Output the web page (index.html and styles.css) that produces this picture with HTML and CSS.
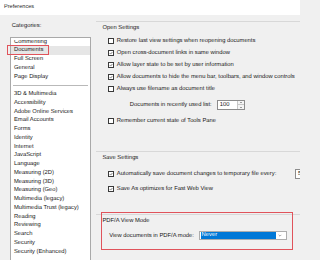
FILE: index.html
```html
<!DOCTYPE html>
<html>
<head>
<meta charset="utf-8">
<title>Preferences</title>
<link rel="stylesheet" href="styles.css">
</head>
<body>
<div class="titlebar">Preferences</div>
<div class="main">
  <div class="left">
    <div class="cat-label">Categories:</div>
    <div class="listbox">
      <div class="viewport">
        <ul class="items">
          <li>Commenting</li>
          <li class="sel">Documents</li>
          <li>Full Screen</li>
          <li>General</li>
          <li>Page Display</li>
          <li class="sep"></li>
          <li>3D &amp; Multimedia</li>
          <li>Accessibility</li>
          <li>Adobe Online Services</li>
          <li>Email Accounts</li>
          <li>Forms</li>
          <li>Identity</li>
          <li>Internet</li>
          <li>JavaScript</li>
          <li>Language</li>
          <li>Measuring (2D)</li>
          <li>Measuring (3D)</li>
          <li>Measuring (Geo)</li>
          <li>Multimedia (legacy)</li>
          <li>Multimedia Trust (legacy)</li>
          <li>Reading</li>
          <li>Reviewing</li>
          <li>Search</li>
          <li>Security</li>
          <li>Security (Enhanced)</li>
        </ul>
      </div>
    </div>
    <div class="callout callout-docs"></div>
  </div>

  <div class="right">
    <section class="group g-open">
      <div class="group-title">Open Settings</div>
      <div class="row"><span class="cb"></span><span>Restore last view settings when reopening documents</span></div>
      <div class="row"><span class="cb on"><svg viewBox="0 0 6 6"><polyline points="1.1,3.1 2.4,4.4 4.9,1.4"/></svg></span><span>Open cross-document links in same window</span></div>
      <div class="row"><span class="cb on"><svg viewBox="0 0 6 6"><polyline points="1.1,3.1 2.4,4.4 4.9,1.4"/></svg></span><span>Allow layer state to be set by user information</span></div>
      <div class="row"><span class="cb on"><svg viewBox="0 0 6 6"><polyline points="1.1,3.1 2.4,4.4 4.9,1.4"/></svg></span><span>Allow documents to hide the menu bar, toolbars, and window controls</span></div>
      <div class="row"><span class="cb"></span><span>Always use filename as document title</span></div>
      <div class="row row-recent">
        <span class="recent-label">Documents in recently used list:</span>
        <span class="spin spin-recent"><span class="spin-val">100</span><span class="spin-btns"><span class="up"></span><span class="down"></span></span></span>
      </div>
      <div class="row row-remember"><span class="cb"></span><span>Remember current state of Tools Pane</span></div>
    </section>

    <section class="group g-save">
      <div class="group-title">Save Settings</div>
      <div class="row row-auto"><span class="cb on"><svg viewBox="0 0 6 6"><polyline points="1.1,3.1 2.4,4.4 4.9,1.4"/></svg></span><span>Automatically save document changes to temporary file every:</span><span class="spin spin-auto"><span class="spin-val">5</span></span></div>
      <div class="row row-saveas"><span class="cb on"><svg viewBox="0 0 6 6"><polyline points="1.1,3.1 2.4,4.4 4.9,1.4"/></svg></span><span>Save As optimizes for Fast Web View</span></div>
    </section>

    <section class="group g-pdfa">
      <div class="group-title">PDF/A View Mode</div>
      <div class="row row-pdfa">
        <span class="pdfa-label">View documents in PDF/A mode:</span>
        <span class="select"><span class="select-val">Never</span><span class="select-arrow"><svg viewBox="0 0 6 4"><polyline points="1,1 3,3 5,1"/></svg></span></span>
      </div>
    </section>
    <div class="callout callout-pdfa"></div>
  </div>
</div>
</body>
</html>
```

FILE: styles.css
```css
html, body {
  margin: 0;
  padding: 0;
  overflow: hidden;
}

body {
  width: 300px;
  height: 260px;
  background: #f0f0f0;
  font-family: "Liberation Sans", Arial, sans-serif;
  font-size: 5.8px;
  color: #161616;
  text-rendering: geometricPrecision;
}

.titlebar {
  height: 15px;
  box-sizing: border-box;
  padding: 2.7px 0 0 4px;
  line-height: 8px;
  font-size: 5.6px;
  color: #2a2a2a;
  background: #ffffff;
}

.main {
  display: flex;
  height: 245px;
}

/* ---------- left: categories ---------- */
.left {
  position: relative;
  flex: none;
  width: 96px;
  box-sizing: border-box;
  padding: 7px 0 0 10px;
}

.cat-label {
  line-height: 8px;
  padding-left: 1.7px;
}

.listbox {
  margin-top: 7px;
  width: 81px;
  height: 230px;
  box-sizing: border-box;
  border: 1px solid #a9a9a9;
  background: #ffffff;
  padding-top: 2px;
}

.viewport {
  height: 100%;
  overflow: hidden;
}

.items {
  list-style: none;
  margin: -2.4px 0 0;
  padding: 0;
}

.items li {
  height: 8.75px;
  line-height: 8.75px;
  padding-left: 3px;
  white-space: nowrap;
}

.items li.sel {
  background: #e6e6e6;
}

.items li.sep {
  display: flex;
  align-items: center;
  padding: 0 2px;
}

.items li.sep::after {
  content: "";
  flex: 1;
  height: 1px;
  background: #b9b9b9;
}

.callout {
  position: absolute;
  box-sizing: border-box;
  border: 1.5px solid #e0535b;
}

.callout-docs {
  left: 7.3px;
  top: 30.3px;
  width: 42px;
  height: 9.7px;
}

/* ---------- right: settings ---------- */
.right {
  position: relative;
  flex: 1;
  padding-top: 6px;
  overflow: hidden;
}

.group {
  border-top: 1px solid #d8d8d8;
  padding-top: 2px;
}

.group-title {
  line-height: 8px;
  padding-left: 6.5px;
}

.row {
  height: 12px;
  display: flex;
  align-items: center;
  white-space: nowrap;
}

.g-open { padding-bottom: 24.3px; }
.g-open .group-title { margin-bottom: 2.7px; }
.row-recent {
  margin-top: 4.3px;
  width: 149px;
  justify-content: flex-end;
}
.row-remember { margin-top: 3.7px; }

.g-save { padding-bottom: 19px; }
.g-save .group-title { margin-bottom: 6px; }
.row-auto { width: 223px; }
.row-saveas { margin-top: 3px; }

.g-pdfa .group-title { margin-bottom: 4.7px; }
.row-pdfa { width: 190.7px; }

.cb {
  flex: none;
  display: flex;
  width: 6.2px;
  height: 6.2px;
  box-sizing: border-box;
  margin: 0 2.3px 0 12.3px;
  border: 0.9px solid #3a3a3a;
  background: #ffffff;
}

.cb svg {
  width: 100%;
  height: 100%;
}

.cb polyline {
  fill: none;
  stroke: #262626;
  stroke-width: 0.8;
}

.recent-label {
  margin-right: 5px;
}

.spin {
  flex: none;
  display: flex;
  box-sizing: border-box;
  height: 10.7px;
  border: 1px solid #8c8c8c;
  background: #ffffff;
}

.spin-recent {
  width: 28.3px;
}

.spin-auto {
  width: 24px;
  margin-left: auto;
}

.spin-val {
  flex: 1;
  padding-left: 2px;
  line-height: 8.7px;
}

.spin-btns {
  flex: none;
  width: 6px;
  display: flex;
  flex-direction: column;
  border-left: 0.5px solid #c8c8c8;
  background: #f4f4f4;
}

.spin-btns span {
  flex: 1;
  display: flex;
  align-items: center;
  justify-content: center;
}

.spin-btns .up {
  border-bottom: 0.5px solid #c8c8c8;
}

.spin-btns .up::after {
  content: "";
  border-left: 1.3px solid transparent;
  border-right: 1.3px solid transparent;
  border-bottom: 1.5px solid #404040;
}

.spin-btns .down::after {
  content: "";
  border-left: 1.3px solid transparent;
  border-right: 1.3px solid transparent;
  border-top: 1.5px solid #404040;
}

.pdfa-label {
  padding-left: 13.3px;
}

.select {
  flex: none;
  display: flex;
  box-sizing: border-box;
  width: 87.7px;
  height: 9.6px;
  margin-left: auto;
  padding: 0.6px;
  border: 1px solid #adadad;
  background: #ffffff;
}

.select-val {
  flex: 1;
  background: #0078d7;
  color: #ffffff;
  padding-left: 1px;
  line-height: 7.4px;
}

.select-arrow {
  flex: none;
  width: 9.5px;
  display: flex;
  align-items: center;
  justify-content: center;
}

.select-arrow svg {
  width: 4px;
  height: 3px;
}

.select-arrow polyline {
  fill: none;
  stroke: #606060;
  stroke-width: 0.8;
}

.callout-pdfa {
  left: 4.7px;
  top: 196.7px;
  width: 192.3px;
  height: 38.3px;
}
```
